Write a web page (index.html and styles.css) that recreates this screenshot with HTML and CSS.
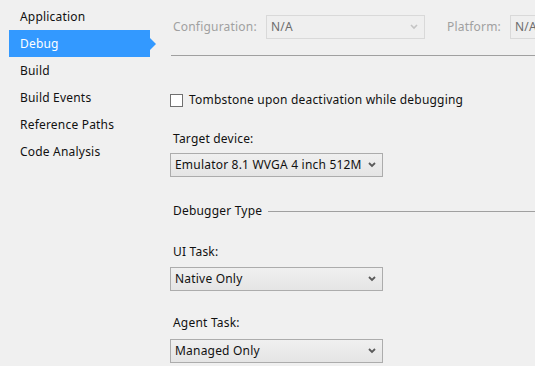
FILE: index.html
```html
<!DOCTYPE html>
<html lang="en">
<head>
    <meta charset="UTF-8">
    <title>Project Properties - Debug</title>
    <link rel="stylesheet" href="styles.css">
</head>
<body>
    <div class="page">
        <ul class="sidebar">
            <li class="nav-item">Application</li>
            <li class="nav-item active">Debug</li>
            <li class="nav-item">Build</li>
            <li class="nav-item">Build Events</li>
            <li class="nav-item">Reference Paths</li>
            <li class="nav-item">Code Analysis</li>
        </ul>

        <div class="content">
            <div class="header">
                <span class="header-label">Configuration:</span>
                <div class="combo combo-disabled combo-config">
                    <span class="combo-text">N/A</span>
                    <svg class="chevron" width="8" height="6" viewBox="0 0 8 6"><path d="M1 1 L4 4 L7 1" fill="none" stroke="#c4c4c4" stroke-width="1.6"/></svg>
                </div>
                <span class="header-label platform-label">Platform:</span>
                <div class="combo combo-disabled combo-platform">
                    <span class="combo-text">N/A</span>
                </div>
            </div>

            <label class="check-row">
                <span class="checkbox"></span>
                <span>Tombstone upon deactivation while debugging</span>
            </label>

            <div class="field-label first-label">Target device:</div>
            <div class="combo combo-target">
                <span class="combo-text">Emulator 8.1 WVGA 4 inch 512M</span>
                <svg class="chevron" width="8" height="6" viewBox="0 0 8 6"><path d="M1 1 L4 4 L7 1" fill="none" stroke="#5a5a5a" stroke-width="1.8"/></svg>
            </div>

            <div class="group-title">Debugger Type</div>

            <div class="field-label">UI Task:</div>
            <div class="combo">
                <span class="combo-text">Native Only</span>
                <svg class="chevron" width="8" height="6" viewBox="0 0 8 6"><path d="M1 1 L4 4 L7 1" fill="none" stroke="#5a5a5a" stroke-width="1.8"/></svg>
            </div>

            <div class="field-label agent-label">Agent Task:</div>
            <div class="combo">
                <span class="combo-text">Managed Only</span>
                <svg class="chevron" width="8" height="6" viewBox="0 0 8 6"><path d="M1 1 L4 4 L7 1" fill="none" stroke="#5a5a5a" stroke-width="1.8"/></svg>
            </div>
        </div>
    </div>
</body>
</html>
```

FILE: styles.css
```css
* {
    margin: 0;
    padding: 0;
    box-sizing: border-box;
}

body {
    background: #f0f0f0;
    font-family: "Noto Sans", "Open Sans", sans-serif;
    font-size: 12px;
    line-height: 16px;
    letter-spacing: 0.2px;
    color: #111;
    width: 535px;
    height: 366px;
    overflow: hidden;
}

.page {
    display: flex;
}

/* left navigation */
.sidebar {
    list-style: none;
    width: 150px;
    flex-shrink: 0;
    padding-top: 3px;
}

.nav-item {
    height: 27px;
    margin-left: 9px;
    padding-left: 11px;
    display: flex;
    align-items: center;
    position: relative;
}

.nav-item.active {
    background: #3399ff;
    color: #fff;
}

.nav-item.active::after {
    content: '';
    position: absolute;
    right: -6px;
    top: 8px;
    border-top: 6px solid transparent;
    border-bottom: 6px solid transparent;
    border-left: 6px solid #3399ff;
}

/* right panel */
.content {
    flex: 1;
    margin-left: 20px;
    display: flex;
    flex-direction: column;
    align-items: flex-start;
    min-width: 0;
    overflow: hidden;
}

.header {
    align-self: stretch;
    display: flex;
    align-items: center;
    padding-top: 15px;
    padding-bottom: 16px;
    margin-left: 1px;
    border-bottom: 1px solid #a0a0a0;
    white-space: nowrap;
    overflow: hidden;
}

.header-label {
    color: #a0a0a0;
    padding-left: 2px;
    width: 95px;
    flex-shrink: 0;
}

.platform-label {
    width: 63px;
    margin-left: 22px;
    padding-left: 0;
}

.combo {
    width: 213px;
    height: 24px;
    border: 1px solid #acacac;
    background: linear-gradient(#f0f0f0, #e5e5e5);
    display: flex;
    align-items: center;
    justify-content: space-between;
    padding: 0 4px 0 4px;
    flex-shrink: 0;
}

.combo-text {
    white-space: nowrap;
}

.chevron {
    margin-right: 2px;
}

.combo-disabled {
    background: #efefef;
    border-color: #d9d9d9;
    color: #6d6d6d;
}

.combo-config {
    width: 159px;
}

.combo-platform {
    width: 80px;
}

.check-row {
    display: flex;
    align-items: center;
    margin-top: 36px;
    white-space: nowrap;
}

.checkbox {
    width: 13px;
    height: 13px;
    border: 1px solid #707070;
    background: #fff;
    margin-right: 6px;
}

.field-label {
    padding-left: 3px;
    margin-top: 24px;
    margin-bottom: 7px;
}

.first-label {
    margin-top: 23px;
    margin-bottom: 6px;
}

.agent-label {
    margin-bottom: 8px;
}

.group-title {
    align-self: stretch;
    display: flex;
    align-items: center;
    padding-left: 3px;
    margin-top: 26px;
    margin-bottom: 1px;
}

.group-title::after {
    content: '';
    flex: 1;
    border-top: 1px solid #a0a0a0;
    margin-left: 6px;
}
```
